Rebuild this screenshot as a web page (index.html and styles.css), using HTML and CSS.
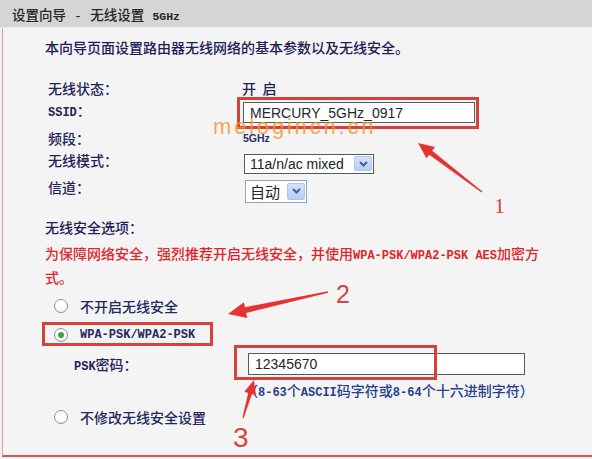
FILE: index.html
```html
<!DOCTYPE html>
<html lang="zh-CN">
<head>
<meta charset="utf-8">
<title>设置向导 - 无线设置 5GHz</title>
<link rel="stylesheet" href="styles.css">
</head>
<body>
<div class="titlebar"><span class="title">设置向导 - 无线设置 <span class="t-band">5GHz</span></span></div>
<div class="panel">
  <p class="intro">本向导页面设置路由器无线网络的基本参数以及无线安全。</p>
  <div class="form">
    <div class="row row-a"><span class="label">无线状态：</span><span class="value">开 启</span></div>
    <div class="row row-b"><span class="label up"><span class="lat">SSID</span>：</span><div class="input ssid">MERCURY_5GHz_0917</div></div>
    <div class="row row-c"><span class="label">频段：</span><span class="band-val">5GHz</span></div>
    <div class="row row-d"><span class="label up2">无线模式：</span>
      <div class="select mode"><span class="sel-text">11a/n/ac mixed</span><span class="sel-btn"><svg width="9" height="6" viewBox="0 0 9 6"><polyline points="1,1 4.5,4.5 8,1" fill="none" stroke="#4a5f8e" stroke-width="2"/></svg></span></div>
    </div>
    <div class="row row-e"><span class="label up2">信道：</span>
      <div class="select chan"><span class="sel-text">自动</span><span class="sel-btn"><svg width="9" height="6" viewBox="0 0 9 6"><polyline points="1,1 4.5,4.5 8,1" fill="none" stroke="#4a5f8e" stroke-width="2"/></svg></span></div>
    </div>
  </div>
  <div class="security">
    <div class="sec-title">无线安全选项：</div>
    <p class="warn">为保障网络安全，强烈推荐开启无线安全，并使用<span class="lat">WPA-PSK/WPA2-PSK AES</span>加密方<br>式。</p>
    <div class="radio-row r1"><span class="radio"></span><span>不开启无线安全</span></div>
    <div class="radio-row r2"><span class="radio checked"></span><span class="lat">WPA-PSK/WPA2-PSK</span></div>
    <div class="psk-row"><span class="psk-label"><span class="lat">PSK</span>密码：</span><div class="input psk-input">12345670</div></div>
    <p class="hint">（<span class="lat">8-63</span>个<span class="lat">ASCII</span>码字符或<span class="lat">8-64</span>个十六进制字符）</p>
    <div class="radio-row r3"><span class="radio"></span><span>不修改无线安全设置</span></div>
  </div>
</div>

<svg class="marks" width="592" height="459" viewBox="0 0 592 459">
  <g fill="none" stroke="#d8403e" stroke-width="3">
    <rect x="238.5" y="98.5" width="239" height="29"/>
    <rect x="43.5" y="323.5" width="168" height="21"/>
    <rect x="235.5" y="346.5" width="200" height="32"/>
  </g>
  <g fill="#e63331">
    <polygon points="482.4,191.5 432.2,150.7 435.0,147.1 418,143 426.4,158.3 429.2,154.7 481.6,192.5"/>
    <polygon points="327.8,291.2 245.0,307.2 243.9,302.3 228,314 247.3,317.9 246.2,313.0 328.2,292.8"/>
    <polygon points="243.6,418.2 252.0,394.1 255.9,395.2 254,380 244.3,391.8 248.2,392.9 242.4,417.8"/>
  </g>
</svg>
<span class="watermark">melogincn.cn</span>
<span class="num n1">1</span>
<span class="num n2">2</span>
<span class="num n3">3</span>
</body>
</html>
```

FILE: styles.css
```css
* { box-sizing: border-box; }
html, body { margin: 0; padding: 0; }
body {
  width: 592px;
  height: 459px;
  overflow: hidden;
  position: relative;
  background: #efefef;
  font-size: 14px;
  font-weight: 500;
  font-family: "Liberation Mono", "Noto Sans CJK SC", monospace;
  color: #1e2358;
}

.titlebar {
  height: 28px;
  background: #d5d5d5;
  border-bottom: 1px solid #e9e9e9;
  display: flex;
  align-items: center;
  padding-left: 12px;
  padding-top: 1px;
  color: #262626;
  font-size: 13.5px;
}
.t-band { font-size: 11.5px; font-weight: bold; }

.panel {
  height: 429px;
  margin-left: 2px;
  border-left: 1px solid #e39a9a;
  border-bottom: 2px solid #d95555;
  background: #f4f4f4;
  padding-top: 11px;
}

.intro {
  margin: 0 0 0 42px;
  line-height: 20px;
  color: #1b2057;
}

.form { margin-top: 18px; padding-left: 45px; }
.row { display: flex; align-items: center; }
.row-a { height: 22px; }
.row-b { height: 27px; }
.row-c { height: 24px; }
.row-d { height: 27px; }
.row-e { height: 28px; }
.label { width: 194px; flex: none; }
.label.up { margin-bottom: 5px; }
.label.up2 { margin-bottom: 8px; }
.value { word-spacing: -2px; }

.lat { font-size: 12px; font-weight: bold; }

.input {
  height: 21px;
  border: 1px solid #595959;
  background: #fff;
  font: 14px "Liberation Sans", Arial, sans-serif;
  color: #262626;
  padding-left: 6px;
  display: flex;
  align-items: center;
}
.ssid { width: 232px; margin-left: 1px; }

.band-val {
  font: bold 10.5px "Liberation Sans", Arial, sans-serif;
  margin-left: 1px;
  color: #2a3068;
}

.select {
  display: flex;
  align-items: center;
  background: #fff;
  border: 1px solid #4f5e60;
  padding-right: 1px;
}
.mode { width: 130px; height: 20px; margin-left: 2px; }
.chan { width: 62px; height: 23px; margin-left: 3px; border-color: #8fa6b8; }
.sel-text {
  flex: 1;
  padding-left: 5px;
  font: 14px "Liberation Sans", Arial, sans-serif;
  color: #222;
}
.chan .sel-text { font: 15px "Noto Sans CJK SC", sans-serif; padding-left: 4px; }
.sel-btn {
  width: 18px;
  height: 15px;
  background: linear-gradient(#d5e2fd, #b7ccf6);
  border: 1px solid #b0c4ee;
  border-radius: 2px;
  display: flex;
  align-items: center;
  justify-content: center;
}
.chan .sel-btn { height: 17px; }

.security { margin-top: 13px; padding-left: 42px; }
.sec-title { height: 22px; line-height: 22px; }
.warn {
  margin: 4px 0 0;
  line-height: 23px;
  color: #e0262a;
}

.radio-row {
  display: flex;
  align-items: center;
  gap: 12px;
  height: 22px;
  margin-left: 9px;
  color: #242a5e;
}
.r1 { margin-top: 4px; }
.r2 { margin-top: 7px; }
.r3 { margin-top: 3px; }

.radio {
  width: 14px;
  height: 14px;
  flex: none;
  border-radius: 50%;
  border: 1.5px solid #8a97a6;
  background: radial-gradient(circle at 50% 40%, #fff 45%, #e4e4e4);
  display: flex;
  align-items: center;
  justify-content: center;
}
.radio.checked::after {
  content: "";
  width: 6px;
  height: 6px;
  border-radius: 50%;
  background: #3fa544;
}

.psk-row {
  display: flex;
  align-items: center;
  height: 22px;
  margin-top: 7px;
  padding-left: 29px;
}
.psk-label { width: 174px; flex: none; }
.psk-input { width: 277px; height: 22px; }

.hint {
  margin: 7px 0 0 199px;
  line-height: 20px;
  color: #27408b;
}

.marks {
  position: absolute;
  left: 0;
  top: 0;
  pointer-events: none;
}

.watermark {
  position: absolute;
  left: 213px;
  top: 116px;
  font: 22px "Liberation Sans", Arial, sans-serif;
  line-height: 1;
  letter-spacing: 2.8px;
  color: rgba(242, 150, 40, 0.82);
}

.num {
  position: absolute;
  line-height: 1;
  color: #d4463f;
  font-family: "Liberation Sans", Arial, sans-serif;
  font-weight: normal;
}
.n1 { left: 494px; top: 195px; font-size: 22px; font-family: "Liberation Serif", serif; }
.n2 { left: 336px; top: 282px; font-size: 25px; }
.n3 { left: 233px; top: 424px; font-size: 28px; }
```
